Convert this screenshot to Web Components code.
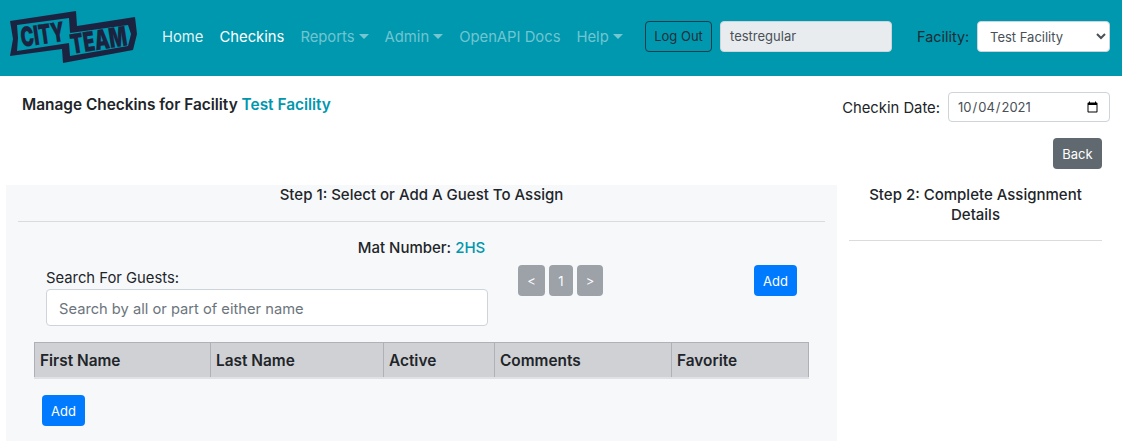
<!DOCTYPE html>
<html><head><meta charset="utf-8">
<style>
html,body{margin:0;padding:0;background:#fff;height:441px;overflow:hidden}
body{font:14.8px/24px Inter,"Liberation Sans",sans-serif;color:#212529}
</style></head><body>
<app-shell></app-shell>
<script>
const sheet=`*{box-sizing:border-box}`;
function def(name,html){
  customElements.define(name,class extends HTMLElement{
    constructor(){super();this.attachShadow({mode:'open'}).innerHTML='<style>'+sheet+'</style>'+html;}
  });
}
def('city-logo',`<style>:host{display:block;width:130px;height:56px}svg{display:block}
text{font:900 27px Inter,"Liberation Sans",sans-serif;fill:#1b2340;stroke:#1b2340;stroke-width:.3}</style>
<svg width="130" height="56" viewBox="8 8 130 56">
<path fill-rule="evenodd" fill="#1b2340" d="M10 20 76 10 77 25 135 16 137 33 133 49 63 62 62 48 10 55 13 38ZM17 24 69 17 70 32 128 24 131 33 128 45 70 55 69 42 17 50 18 37Z"/>
<text transform="translate(22 46) rotate(-8) scale(.65 1)">CITY</text>
<text transform="translate(72 53) rotate(-9) scale(.69 1)">TEAM</text>
</svg>`);
def('nav-link',`<style>:host{display:block;color:var(--c,rgba(255,255,255,.45));white-space:nowrap;font-size:14.8px;line-height:24px}
.caret{display:inline-block;margin-left:4px;vertical-align:3px;border-top:5px solid;border-left:5px solid transparent;border-right:5px solid transparent}
:host(:not([menu])) .caret{display:none}</style><slot></slot><span class="caret"></span>`);
def('app-header',`<style>:host{display:flex;align-items:center;height:76px;background:#0098ae;padding:0 12px 3px 8px}
nav{display:flex;gap:16px;margin-left:24px;width:462px}
.out{margin-left:21px;width:67px;height:31px;border:1px solid #1c3c4a;border-radius:4px;color:#212f3a;font-size:13px;line-height:29px;text-align:center}
.user{margin-left:8px;width:172px;height:31px;background:#e9ecef;border:1px solid #ced4da;border-radius:4px;font-size:13px;line-height:29px;padding:0 9px;color:#495057}
.fac{margin-left:25px;width:52px;white-space:nowrap;color:#1d2b36;font-size:14.4px}
select{margin-left:8px;width:133px;height:31px;border:1px solid #ced4da;border-radius:4px;background:#fff;color:#495057;font:13px Inter,"Liberation Sans",sans-serif;padding:0 8px}
</style>
<city-logo></city-logo>
<nav><nav-link style="--c:rgba(255,255,255,.9)">Home</nav-link><nav-link style="--c:#fff">Checkins</nav-link><nav-link menu>Reports</nav-link><nav-link menu>Admin</nav-link><nav-link>OpenAPI Docs</nav-link><nav-link menu>Help</nav-link></nav>
<div class="out">Log Out</div><div class="user">testregular</div><span class="fac">Facility:</span>
<select><option>Test Facility</option></select>`);
def('ui-button',`<style>:host{display:inline-block;height:31px;width:var(--w,43px);border-radius:4px;font-size:13px;line-height:32px;text-align:center;color:#fff;background:var(--bg,#007bff);white-space:nowrap;opacity:var(--op,1)}</style><slot></slot>`);
def('top-row',`<style>:host{display:block;height:109px;padding:16px 12px 0 22px}
.a{display:flex;justify-content:space-between;height:30px}
h1{margin:0;font-size:15.4px;font-weight:600;line-height:26px}
b{font-weight:600;color:#0097ae}
.d{display:flex;align-items:center;gap:8px}
.d span{padding-top:2px}
input{width:162px;height:30px;border:1px solid #ced4da;border-radius:4px;font:13px Inter,"Liberation Sans",sans-serif;color:#495057;padding:0 8px;background:#fff}
.b{display:flex;justify-content:flex-end;margin-top:16px;padding-right:8px}
</style>
<div class="a"><h1>Manage Checkins for Facility <b>Test Facility</b></h1>
<div class="d"><span>Checkin Date:</span><input type="date" value="2021-10-04"></div></div>
<div class="b"><ui-button style="--bg:#60696f;--w:49px">Back</ui-button></div>`);
def('data-table',`<style>:host{display:block;margin:16px 28px 0}
table{border-collapse:collapse;width:775px;table-layout:fixed;background:#d0d1d5;border-bottom:2px solid #dee2e6}
th{height:35px;padding:2px 5px 0;text-align:left;font-size:15.4px;font-weight:600;border:1px solid #aeb2b6;border-bottom:0;color:#212529}
</style><table><colgroup><col style="width:176px"><col style="width:173px"><col style="width:111px"><col style="width:177px"><col></colgroup>
<tr><th>First Name</th><th>Last Name</th><th>Active</th><th>Comments</th><th>Favorite</th></tr></table>`);
def('step-one',`<style>:host{display:block;width:831px;height:256px;background:#f7f8fa}
.t{text-align:center;height:37px;line-height:20px;font-size:15px;font-weight:500;border-bottom:1px solid #d9dbdd;margin:0 12px}
.m{text-align:center;margin-top:13px;height:24px;line-height:26px;font-size:15px;font-weight:500}
.m span{color:#0097ae}
.r{display:flex;margin-top:6px;height:61px}
.s{margin-left:40px;width:442px}
label{display:block;line-height:26px;height:24px}
input{width:100%;height:37px;border:1px solid #ced4da;border-radius:4px;padding:2px 12px 0;font:14.7px Inter,"Liberation Sans",sans-serif;background:#fff;display:block}
input::placeholder{color:#6c757d;opacity:1}
.p{margin-left:30px;display:flex;gap:4px;height:31px;--bg:#6c757d;--op:.65}
.add{margin-left:151px}
.last{margin:16px 0 0 36px}
</style>
<div class="t">Step 1: Select or Add A Guest To Assign</div>
<div class="m">Mat Number: <span>2HS</span></div>
<div class="r"><div class="s"><label>Search For Guests:</label><input placeholder="Search by all or part of either name"></div>
<div class="p"><ui-button style="--w:27px">&lt;</ui-button><ui-button style="--w:24px">1</ui-button><ui-button style="--w:26px">&gt;</ui-button></div>
<ui-button class="add">Add</ui-button></div>
<data-table></data-table>
<div class="last"><ui-button>Add</ui-button></div>`);
def('step-two',`<style>:host{display:block;width:253px;margin:0 0 0 12px;height:56px;text-align:center;font-size:15px;font-weight:500;line-height:20px;border-bottom:1px solid #d9dbdd}</style>Step 2: Complete Assignment Details`);
def('app-shell',`<style>:host{display:block}.c{display:flex;padding-left:6px}</style>
<app-header></app-header><top-row></top-row><div class="c"><step-one></step-one><step-two></step-two></div>`);
</script>
</body></html>
